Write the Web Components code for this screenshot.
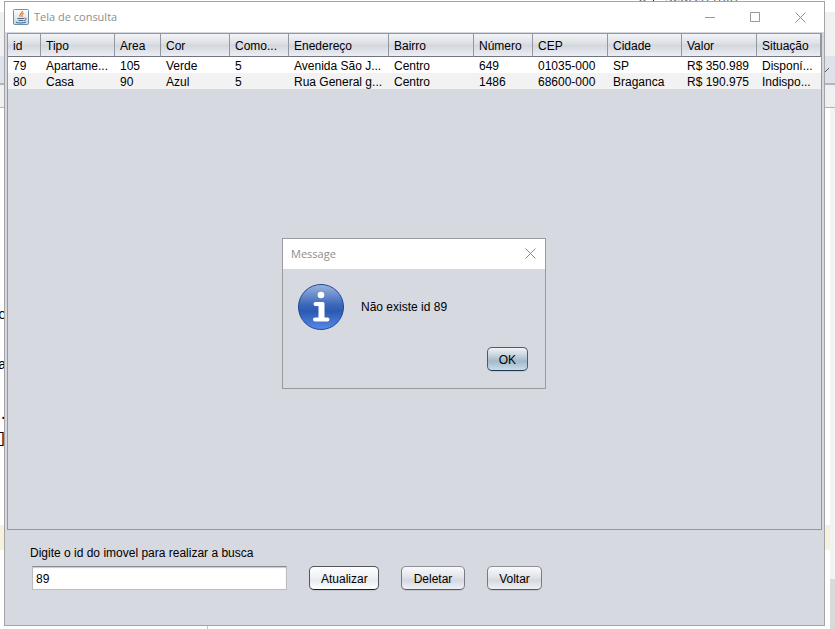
<!DOCTYPE html>
<html lang="pt">
<head>
<meta charset="utf-8">
<title>Tela de consulta</title>
<style>
html,body{height:100%;margin:0}
body{font:12px/16px "Liberation Sans",Arial,sans-serif;color:#000;background:#fff;overflow:hidden}
</style>
</head>
<body>
<consulta-desktop>
  <editor-backdrop slot="backdrop"></editor-backdrop>
  <app-window>
    <java-icon slot="icon"></java-icon>
    <span slot="title">Tela de consulta</span>
    <property-table></property-table>
    <search-form></search-form>
  </app-window>
  <message-dialog slot="dialog" heading="Message">Não existe id 89</message-dialog>
</consulta-desktop>
<script>
function element(name, html, setup) {
  customElements.define(name, class extends HTMLElement {
    constructor() {
      super();
      const t = document.createElement('template');
      t.innerHTML = html;
      this.attachShadow({mode: 'open'}).append(t.content.cloneNode(true));
    }
    connectedCallback() { if (setup) setup.call(this, this.shadowRoot); }
  });
}

element('consulta-desktop', `
<style>
:host{display:block;position:relative;height:100%;box-sizing:border-box;padding:1px 10px 3px 4px}
.back{position:absolute;inset:0}
.main{position:relative;height:100%}
.dialog{position:absolute;left:282px;top:238px}
</style>
<div class="back"><slot name="backdrop"></slot></div>
<div class="main"><slot></slot></div>
<div class="dialog"><slot name="dialog"></slot></div>`);

element('editor-backdrop', `
<style>
:host{display:block;position:relative;height:100%;overflow:hidden}
i{position:absolute}
span{position:absolute;font:14px/16px "Liberation Mono",monospace}
.left{left:0;width:5px}
.right{right:0;width:12px}
.a{top:12px;height:44px;background:#f0f0f0}
.b{top:56px;height:27px;background:#dfe2ea}
.c{top:83px;height:2px;background:#b4b4b4}
.d{top:85px;height:22px;background:#f0f0f0;border-bottom:1px solid #b4b4b4}
.e{top:525px;height:25px;background:#f7f2dc}
.f{right:0;top:108px;width:5px;bottom:0;background:#f3f3f3}
.g{right:0;top:579px;width:5px;bottom:0;background:#dadada}
.h{left:207px;bottom:0;height:4px;width:1px;background:#d3b9d0}
svg{position:absolute;right:0;top:60px}
.clip{position:absolute;overflow:hidden;left:635px;top:0;width:110px;height:3px;color:#666}
.clip span{top:-10px;left:30px;font:14px/14px "Open Sans",sans-serif;white-space:nowrap}
.clip b{position:absolute;left:4px;top:-5px;width:5px;height:5px;border:1px solid #345;border-radius:50%}
.clip u{position:absolute;left:18px;top:0;width:1px;height:1px;background:#222}
</style>
<i class="left a"></i><i class="right a"></i><i class="left b"></i><i class="right b"></i>
<i class="left c"></i><i class="right c"></i><i class="left d"></i><i class="right d"></i>
<i class="left e"></i><i class="right e"></i><i class="f"></i><i class="g"></i><i class="h"></i>
<svg width="12" height="16"><path d="M2 12 L6 8" stroke="#555" fill="none"/></svg>
<div class="clip"><b></b><u></u><span>Search min</span></div>
<span style="left:-2px;top:307px">c</span><span style="left:-2px;top:357px">a</span>
<span style="left:-1px;top:407px">.</span><span style="left:-2px;top:431px">]</span>`);

element('java-icon', `
<style>:host{display:block;width:16px;height:16px}svg{display:block}</style>
<svg width="16" height="16" viewBox="0 0 16 16" fill="none">
<defs><linearGradient id="g" x2="0" y2="1"><stop stop-color="#fff"/><stop offset="1" stop-color="#c3d5e2"/></linearGradient></defs>
<rect x=".5" y=".5" width="15" height="15" rx="1" fill="url(#g)" stroke="#6f8fa8"/>
<path d="M9.500 2C9.500 4 5.500 5 7 8M11 4C8.500 5 8.500 6 9.500 8" stroke="#ee7d2b" stroke-width="1.300"/>
<path d="M4.500 9.500h6.500M5.500 11.500h5M3 13.300c3 1 6 1 10-.3M11.500 9c2.500 0 1.500 2.500-.5 2.500" stroke="#3f6c92"/>
</svg>`);

element('app-window', `
<style>
:host{display:flex;flex-direction:column;height:100%;box-sizing:border-box;border:1px solid #a2a4a7;background:#d6d9e0}
header{display:flex;align-items:center;height:30px;flex:none;background:#fff;padding:0 1px 0 8px;color:#8e8e8e;font:11px/16px "Open Sans",sans-serif;gap:5px}
.title{flex:1}
nav{display:flex}
button{width:45px;height:28px;border:0;background:none;padding:0;display:grid;place-items:center}
svg{display:block}
main{flex:1;min-height:0;display:flex;flex-direction:column;padding:1px 2px 0}
</style>
<header><slot name="icon"></slot><div class="title"><slot name="title"></slot></div>
<nav>
<button aria-label="Minimizar"><svg width="11" height="11"><path d="M0 5.500h10" stroke="#999"/></svg></button>
<button aria-label="Maximizar"><svg width="11" height="11"><path d="M.5.5h9v9h-9z" fill="none" stroke="#999"/></svg></button>
<button aria-label="Fechar"><svg width="11" height="11"><path d="M.5.5l10 10M10.500.5l-10 10" stroke="#8c8c8c"/></svg></button>
</nav></header>
<main><slot></slot></main>`);

element('property-table', `
<style>
:host{display:block;flex:1;min-height:0;border:1px solid #9297a1;overflow:hidden}
table{width:100%;table-layout:fixed;border-collapse:separate;border-spacing:0}
th,td{font-weight:400;text-align:left;padding:0 0 0 5px;overflow:hidden;text-overflow:ellipsis;white-space:nowrap}
th{height:21px;padding-top:1px;line-height:20px;border-right:1px solid #9297a1;border-bottom:1px solid #70747f;background:linear-gradient(#f3f4f7,#dcdfe5 45%,#d3d6dd 50%,#eceef4)}
td{height:14px;line-height:14px;padding-top:2px;background:#fff}
tr:nth-child(even) td{background:#f2f2f2}
</style>
<table><colgroup></colgroup><thead><tr></tr></thead><tbody></tbody></table>`, function (root) {
  const cols = [['id',33],['Tipo',74],['Area',46],['Cor',69],['Como...',59],['Enedereço',100],['Bairro',85],['Número',59],['CEP',75],['Cidade',74],['Valor',75],['Situação',64]];
  const rows = [
    ['79','Apartame...','105','Verde','5','Avenida São J...','Centro','649','01035-000','SP','R$ 350.989','Disponí...'],
    ['80','Casa','90','Azul','5','Rua General g...','Centro','1486','68600-000','Braganca','R$ 190.975','Indispo...']];
  const total = cols.reduce((s, c) => s + c[1], 0);
  root.querySelector('colgroup').innerHTML = cols.map(c => `<col style="width:calc(100% * ${c[1]} / ${total})">`).join('');
  root.querySelector('thead tr').innerHTML = cols.map(c => `<th scope="col">${c[0]}</th>`).join('');
  root.querySelector('tbody').innerHTML = rows.map(r => '<tr>' + r.map(v => `<td>${v}</td>`).join('') + '</tr>').join('');
});

element('nimbus-button', `
<style>
:host{display:block}
button{display:block;box-sizing:border-box;width:100%;height:24px;padding:1px 11px 0;border:1px solid #777b83;border-top-color:#8d9199;border-bottom-color:#53575e;border-radius:5px;font:inherit;color:#000;background:linear-gradient(#fafafc,#e2e4e9 45%,#d5d8df 60%,#eff1f6);box-shadow:0 1px 0 #c3c6cd;white-space:nowrap}
:host([hover]) button{border-color:#50555e;border-bottom-color:#1e2228;background:linear-gradient(#fff,#f0f2f6 45%,#e7eaf1 60%,#fff)}
:host([default]) button{border-color:#455d70;border-bottom-color:#1f384d;background:linear-gradient(#f1f4f7,#b7c8d4 45%,#a3b8c8 60%,#c8dced)}
</style>
<button type="button"><slot></slot></button>`);

element('search-form', `
<style>
:host{display:block;flex:none;padding:15px 22px 35px 23px}
label{display:block;height:16px}
.row{display:grid;grid-template-columns:255px 70px 64px 55px;gap:22px;padding:5px 0 0 2px}
input{box-sizing:border-box;width:100%;height:24px;margin:0;padding:1px 3px 0;border:1px solid #bbbdc2;border-top-color:#888b91;border-radius:0;background:#fff;box-shadow:inset 0 1px 1px #c8c8c8;font:inherit;color:#000;outline:0}
</style>
<label for="id">Digite o id do imovel para realizar a busca</label>
<div class="row"><input id="id" type="text" value="89">
<nimbus-button hover>Atualizar</nimbus-button><nimbus-button>Deletar</nimbus-button><nimbus-button>Voltar</nimbus-button></div>`);

element('message-dialog', `
<style>
:host{display:block;box-sizing:border-box;width:264px;border:1px solid #999ba0;background:#d6d9e0}
header{display:flex;align-items:center;justify-content:space-between;height:30px;background:#fff;padding:0 9px 0 8px;font:11px/16px "Open Sans",sans-serif;color:#8e8e8e}
header button{border:0;background:none;padding:0 0 2px}
svg{display:block}
.body{display:flex;align-items:center;gap:16px;padding:14px 15px 0 14px}
footer{display:flex;justify-content:flex-end;padding:16px 17px 17px}
</style>
<header><span id="h"></span><button aria-label="Fechar"><svg width="11" height="11"><path d="M.5.5l10 10M10.500.5l-10 10" stroke="#8c8c8c"/></svg></button></header>
<div class="body">
<svg width="48" height="48" viewBox="0 0 48 48"><defs><linearGradient id="b" x2="0" y2="1"><stop stop-color="#9db5df"/><stop offset=".45" stop-color="#3c67b9"/><stop offset=".6" stop-color="#2c5ab2"/><stop offset="1" stop-color="#568be8"/></linearGradient></defs>
<circle cx="24" cy="24" r="22.500" fill="url(#b)" stroke="#1e479b"/>
<circle cx="24" cy="12" r="3.300" fill="#fff"/>
<path d="M18.500 19h7.500q1.500 0 1.500 1.500v14h3a2 2 0 0 1 0 4h-12.500a2 2 0 0 1 0-4h3.500v-11.500h-3a2 2 0 0 1 0-4z" fill="#fff"/></svg>
<div><slot></slot></div></div>
<footer><nimbus-button default>OK</nimbus-button></footer>`, function (root) {
  root.querySelector('#h').textContent = this.getAttribute('heading');
});
</script>
</body>
</html>
